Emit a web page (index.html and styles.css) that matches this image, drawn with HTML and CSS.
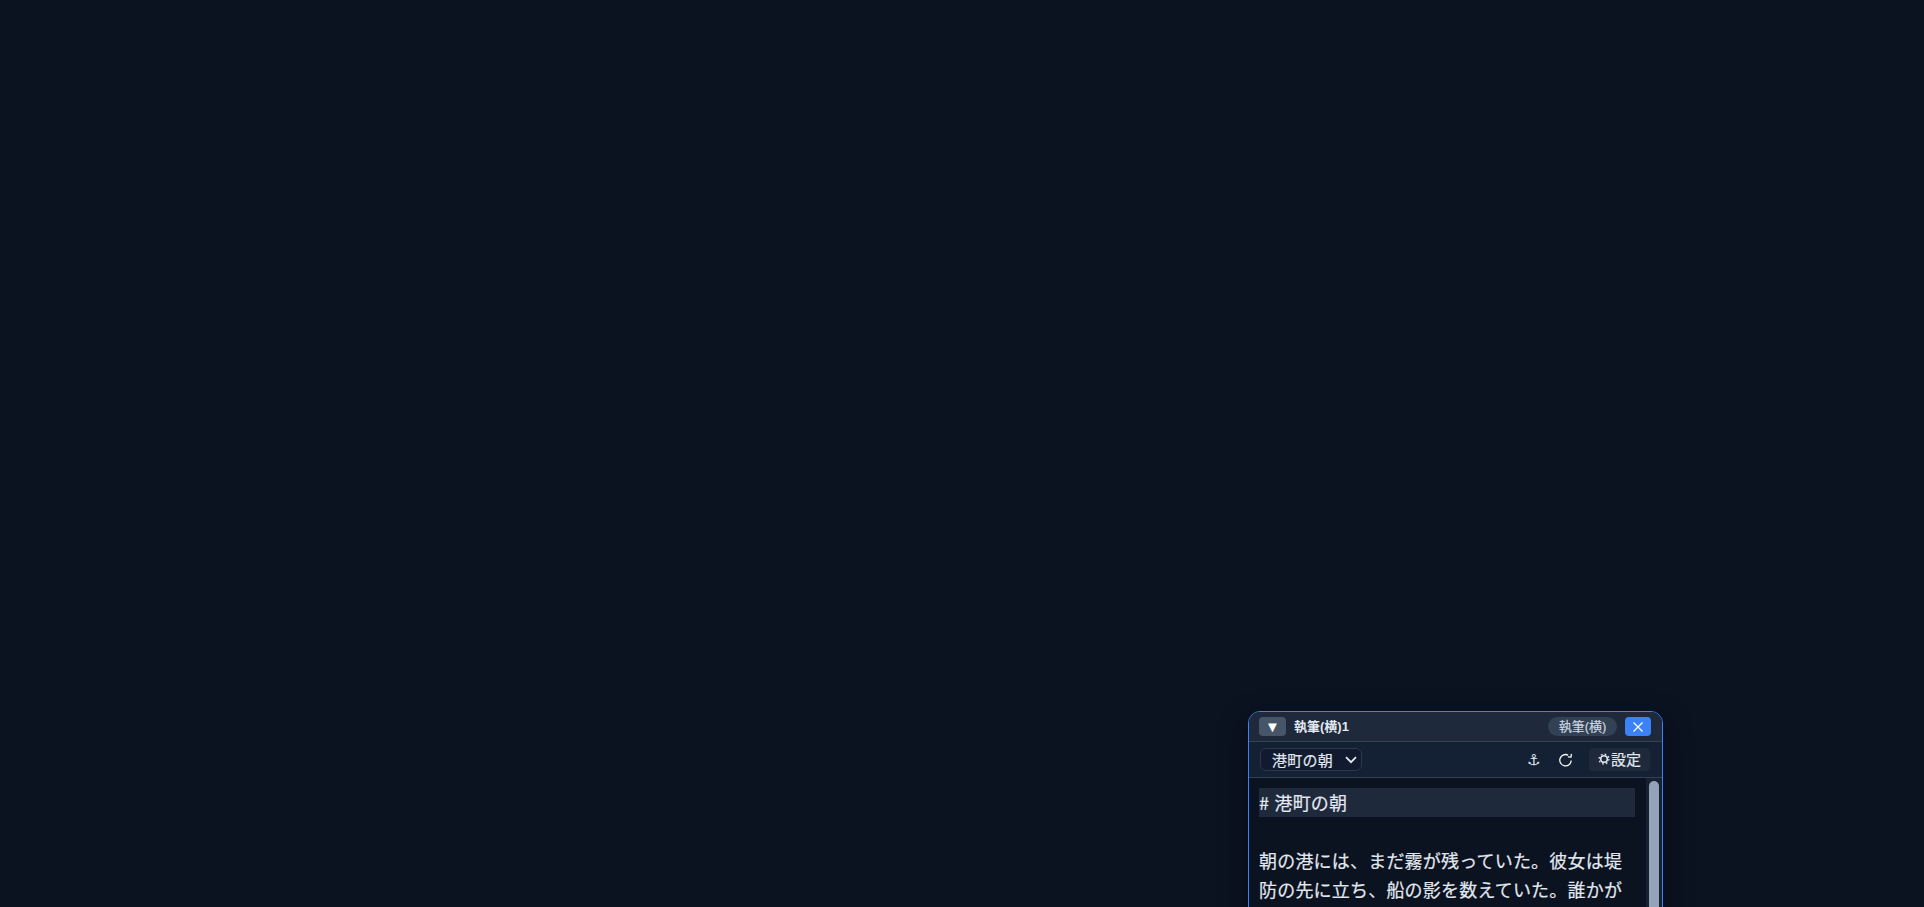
FILE: index.html
```html
<!DOCTYPE html>
<html lang="ja">
<head>
<meta charset="utf-8">
<title>執筆(横)1</title>
<link rel="stylesheet" href="styles.css">
</head>
<body>
<section class="window">
  <header class="titlebar">
    <button class="collapse" type="button">▼</button>
    <span class="title">執筆(横)1</span>
    <span class="pill">執筆(横)</span>
    <button class="close" type="button" aria-label="閉じる">
      <svg viewBox="0 0 12 12" width="12" height="12"><path d="M1.5 1.5l9 9M10.5 1.5l-9 9" /></svg>
    </button>
  </header>
  <div class="toolbar">
    <div class="select">
      <span>港町の朝</span>
      <svg class="chev" viewBox="0 0 12 8" width="12" height="8"><path d="M1 1.2l5 5 5-5" /></svg>
    </div>
    <div class="tools">
      <span class="tool anchor">⚓︎</span>
      <span class="tool reload">
        <svg viewBox="0 0 16 14" width="16" height="14"><path d="M13.2 7.5A5.7 5.7 0 1 1 10.2 2.2M13.4 .9L13 4 9.9 3.9" /></svg>
      </span>
      <button class="settings" type="button">
        <svg class="gear" viewBox="0 0 12 12" width="12" height="12"><circle class="ring" cx="6" cy="6" r="3.3" /><circle class="teeth" cx="6" cy="6" r="4.9" /></svg>設定
      </button>
    </div>
  </div>
  <div class="body">
    <div class="editor">
      <div class="line heading"># <span class="heading-text">港町の朝</span></div>
      <div class="line">&nbsp;</div>
      <div class="line">朝の港には、まだ霧が残っていた。彼女は堤防の先に立ち、船の影を数えていた。誰かが</div>
    </div>
    <div class="scrollbar"><div class="thumb"></div></div>
  </div>
</section>
</body>
</html>
```
FILE: styles.css
```css
* { box-sizing: border-box; }
html, body { height: 100%; }
body {
  margin: 0;
  background: #0b1220;
  overflow: hidden;
  position: relative;
  font-family: "Liberation Sans", "Noto Sans CJK JP", sans-serif;
  color: #e2e8f0;
}
.window {
  position: absolute;
  left: 1248px;
  top: 711px;
  width: 415px;
  height: 420px;
  border: 1px solid #3b82f6;
  border-radius: 12px;
  background: #0b1220;
  box-shadow: 0 10px 30px rgba(0, 0, 0, .35);
  display: flex;
  flex-direction: column;
}
button { font-family: inherit; border: 0; padding: 0; color: inherit; }
.titlebar {
  height: 30px;
  flex: none;
  display: flex;
  align-items: center;
  padding: 0 11px 0 10px;
  background: #1e293b;
  border-bottom: 1px solid #334155;
  border-radius: 11px 11px 0 0;
}
.collapse {
  width: 27px;
  height: 19px;
  border-radius: 4px;
  background: #475569;
  font-size: 15px;
  line-height: 19px;
  color: #fff;
}
.title {
  margin-left: 8px;
  padding-bottom: 2px;
  font-size: 13px;
  font-weight: 700;
  flex: 1;
  color: #e2e8f0;
}
.pill {
  width: 69px;
  height: 19px;
  border-radius: 10px;
  background: #334155;
  font-size: 13px;
  line-height: 19px;
  text-align: center;
  color: #cbd5e1;
  -webkit-text-stroke: .2px #cbd5e1;
}
.close {
  margin-left: 8px;
  width: 26px;
  height: 19px;
  border-radius: 4px;
  background: #3b82f6;
  display: flex;
  align-items: center;
  justify-content: center;
}
.close path { stroke: #fff; stroke-width: 1.2; fill: none; }
.toolbar {
  height: 36px;
  flex: none;
  display: flex;
  align-items: center;
  justify-content: space-between;
  padding: 0 12px 0 11px;
  background: #142033;
  border-bottom: 1px solid #334155;
}
.select {
  width: 102px;
  height: 23px;
  border: 1px solid #2a374c;
  border-radius: 6px;
  background: #111a2e;
  display: flex;
  align-items: center;
  justify-content: space-between;
  padding: 0 4px 0 11px;
  font-size: 15px;
  letter-spacing: .25px;
  color: #e2e8f0;
  -webkit-text-stroke: .2px #e2e8f0;
}
.chev path { stroke: #e2e8f0; stroke-width: 1.8; fill: none; }
.tools { display: flex; align-items: center; }
.tool {
  width: 31px;
  height: 23px;
  display: flex;
  align-items: center;
  justify-content: center;
  font-size: 15px;
  color: #e2e8f0;
}
.anchor { position: relative; left: -1px; }
.reload path { stroke: #fff; stroke-width: 1.25; fill: none; }
.settings {
  margin-left: 8px;
  width: 61px;
  height: 23px;
  border-radius: 4px;
  background: #1e293b;
  font-size: 15px;
  color: #e2e8f0;
  -webkit-text-stroke: .2px #e2e8f0;
  display: flex;
  align-items: center;
  justify-content: center;
  padding-bottom: 2px;
}
.gear { margin-right: 1px; }
.ring { fill: none; stroke: #e2e8f0; stroke-width: 1.6; }
.teeth { fill: none; stroke: #e2e8f0; stroke-width: 1.3; stroke-dasharray: 1.7 2.15; }
.body { flex: 1; display: flex; min-height: 0; }
.editor {
  flex: 1;
  padding: 10px 11px 0 10px;
  font-family: "Noto Sans CJK JP", sans-serif;
  font-size: 18px;
  letter-spacing: .2px;
  line-height: 29px;
  color: #e2e8f0;
  -webkit-text-stroke: .2px #e2e8f0;
}
.heading { background: #1e293b; }
.heading-text { margin-left: 1px; }
.scrollbar { width: 16px; flex: none; background: #172133; padding: 3px 3px 0; }
.thumb { height: 180px; width: 10px; border-radius: 5px; background: #94a3b8; }
```
